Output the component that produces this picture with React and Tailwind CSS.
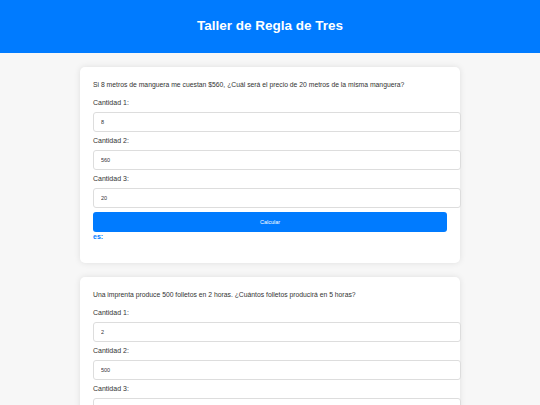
import { useState } from "react";

const problems = [
  {
    id: 1,
    text: "Si 8 metros de manguera me cuestan $560, ¿Cuál será el precio de 20 metros de la misma manguera?",
    values: ["8", "560", "20"],
  },
  {
    id: 2,
    text: "Una imprenta produce 500 folletos en 2 horas. ¿Cuántos folletos producirá en 5 horas?",
    values: ["2", "500", "5"],
  },
];

function ProblemCard({ problem }) {
  const [values, setValues] = useState(problem.values);
  const [result, setResult] = useState("");

  const calcular = () => {
    const [a, b, c] = values.map(Number);
    if (!a) return;
    setResult(((b * c) / a).toString());
  };

  return (
    <section className="rounded-[5px] bg-white px-[13px] pt-[13px] pb-[21px] shadow-[0_0_6px_rgba(0,0,0,0.1)]">
      <p className="text-[6.8px] leading-[10px] text-[#333]">{problem.text}</p>
      <div className="mt-[8px]">
        {values.map((v, i) => (
          <div key={i}>
            <label className="block text-[7px] leading-[10px] text-[#333]">Cantidad {i + 1}:</label>
            <input
              type="number"
              value={v}
              onChange={(e) =>
                setValues((prev) => prev.map((p, j) => (j === i ? e.target.value : p)))
              }
              className="my-[4px] block h-[20px] w-[calc(100%+14px)] rounded-[3px] border border-[#ddd] bg-white px-[7px] text-[5.5px] text-[#333] outline-none"
            />
          </div>
        ))}
      </div>
      <button
        onClick={calcular}
        className="block h-[20px] w-full rounded-[3px] bg-[#007bff] text-[5.5px] text-white"
      >
        Calcular
      </button>
      <p className="text-[7px] font-bold leading-[10px] text-[#007bff]">{result ? `${result} es:` : "es:"}</p>
    </section>
  );
}

export default function App() {
  return (
    <div className="min-h-[405px] bg-[#f7f7f7] font-['Liberation_Sans',Arial,sans-serif]">
      <header className="flex h-[53px] items-center justify-center bg-[#007bff]">
        <h1 className="text-[13.5px] font-bold text-white">Taller de Regla de Tres</h1>
      </header>
      <main className="mx-auto flex w-[380px] flex-col gap-[14px] py-[14px]">
        {problems.map((p) => (
          <ProblemCard key={p.id} problem={p} />
        ))}
      </main>
    </div>
  );
}
